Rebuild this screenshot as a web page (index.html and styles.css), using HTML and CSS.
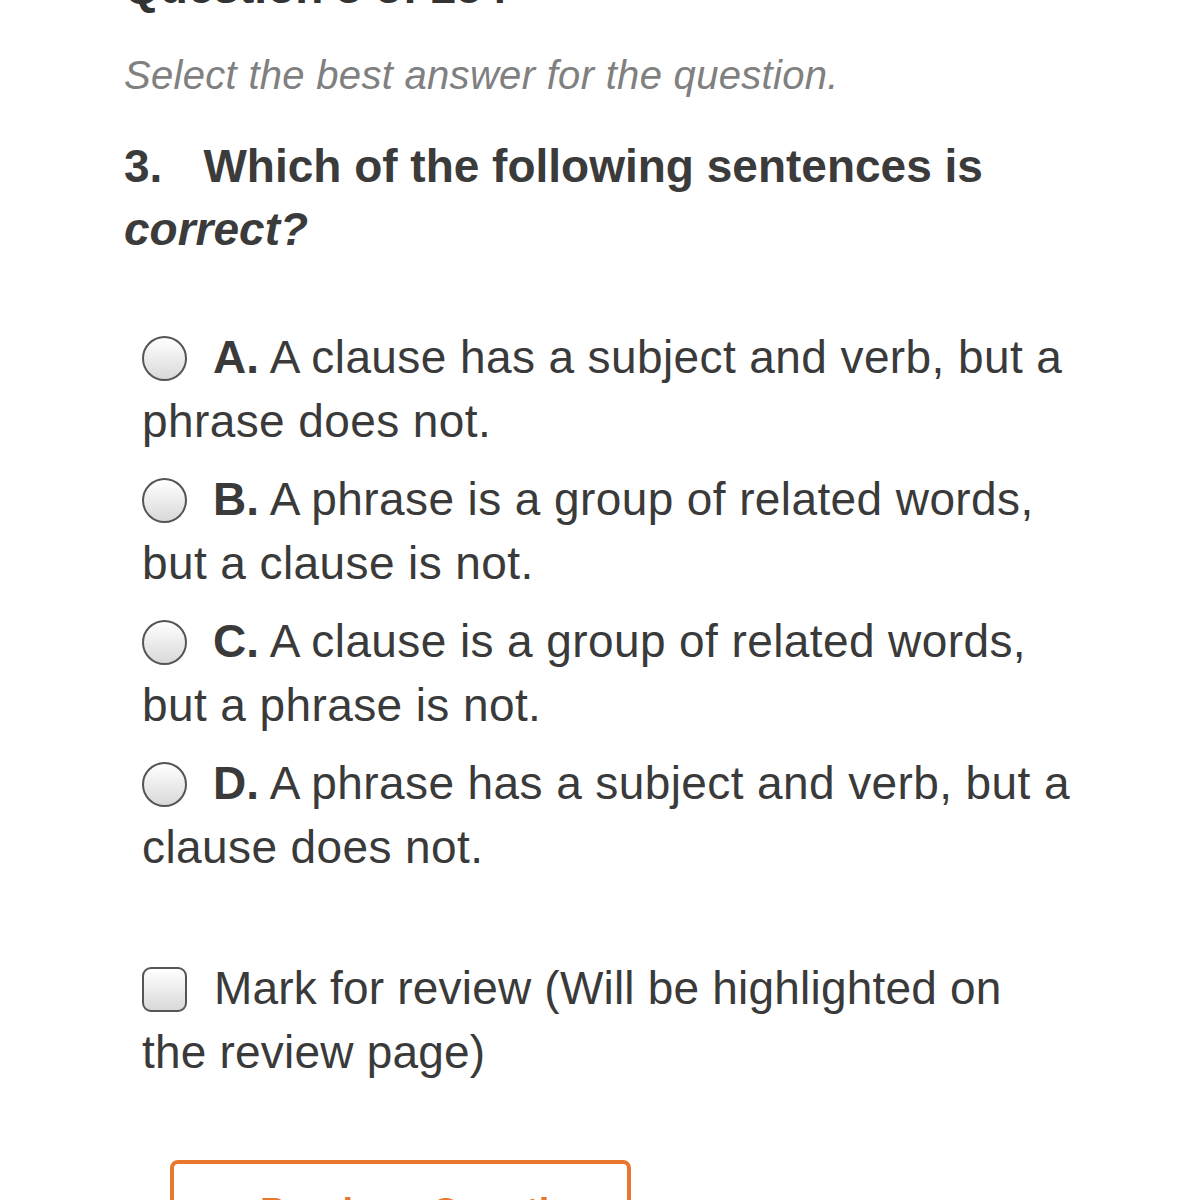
FILE: index.html
```html
<!DOCTYPE html>
<html>
<head>
<meta charset="utf-8">
<link rel="stylesheet" href="styles.css">
</head>
<body>
<div class="page">
  <h1 class="title">Question 3 of 254</h1>
  <p class="subtitle">Select the best answer for the question.</p>
  <div class="question"><span class="qnum">3.</span>Which of the following sentences is <em>correct?</em></div>
  <div class="options">
    <div class="option"><span class="radio"></span><b>A.</b> A clause has a subject and verb, but a phrase does not.</div>
    <div class="option"><span class="radio"></span><b>B.</b> A phrase is a group of related words, but a clause is not.</div>
    <div class="option"><span class="radio"></span><b>C.</b> A clause is a group of related words, but a phrase is not.</div>
    <div class="option"><span class="radio"></span><b>D.</b> A phrase has a subject and verb, but a clause does not.</div>
    <div class="mark"><span class="check"></span>Mark for review (Will be highlighted on the review page)</div>
    <div class="btn">Previous Question</div>
  </div>
</div>
</body>
</html>
```

FILE: styles.css
```css
html, body {
  margin: 0;
  padding: 0;
  background: #ffffff;
  overflow: hidden;
}
.page {
  padding-left: 124px;
  width: 960px;
  font-family: "Liberation Sans", Arial, sans-serif;
  color: #3a3a3a;
}
.title {
  margin: -44px 0 0 0;
  font-size: 46px;
  line-height: 63px;
  font-weight: bold;
  color: #333333;
}
.subtitle {
  margin: 31px 0 0 0;
  font-size: 40px;
  line-height: 50px;
  font-style: italic;
  letter-spacing: 0.3px;
  color: #808080;
}
.question {
  margin-top: 35px;
  font-size: 46px;
  line-height: 63px;
  font-weight: bold;
  color: #3b3b3b;
  width: 900px;
}
.question em {
  font-style: italic;
}
.qnum {
  margin-right: 41px;
}
.options {
  padding-left: 18px;
  margin-top: 64px;
}
.option {
  font-size: 46px;
  line-height: 64px;
  letter-spacing: 0.4px;
  margin-bottom: 14px;
  width: 960px;
}
.option b {
  font-weight: bold;
  letter-spacing: 0;
  color: #3a3a3a;
}
.radio {
  display: inline-block;
  width: 41px;
  height: 41px;
  border: 2.5px solid #555555;
  border-radius: 50%;
  background: linear-gradient(#ffffff, #d9d9d9);
  vertical-align: -8px;
  margin-right: 26px;
}
.mark {
  margin-top: 77px;
  font-size: 46px;
  line-height: 64px;
  letter-spacing: 0.2px;
  width: 900px;
}
.check {
  display: inline-block;
  width: 41px;
  height: 41px;
  border: 2.5px solid #555555;
  border-radius: 9px;
  background: linear-gradient(#ffffff, #d9d9d9);
  vertical-align: -8px;
  margin-right: 27px;
}
.btn {
  margin: 76px 0 0 28px;
  width: 461px;
  height: 120px;
  border: 4px solid #e8782e;
  border-radius: 8px;
  padding: 16px 0 0 86px;
  box-sizing: border-box;
  font-size: 38px;
  line-height: 64px;
  font-weight: bold;
  color: #e8782e;
}
```
